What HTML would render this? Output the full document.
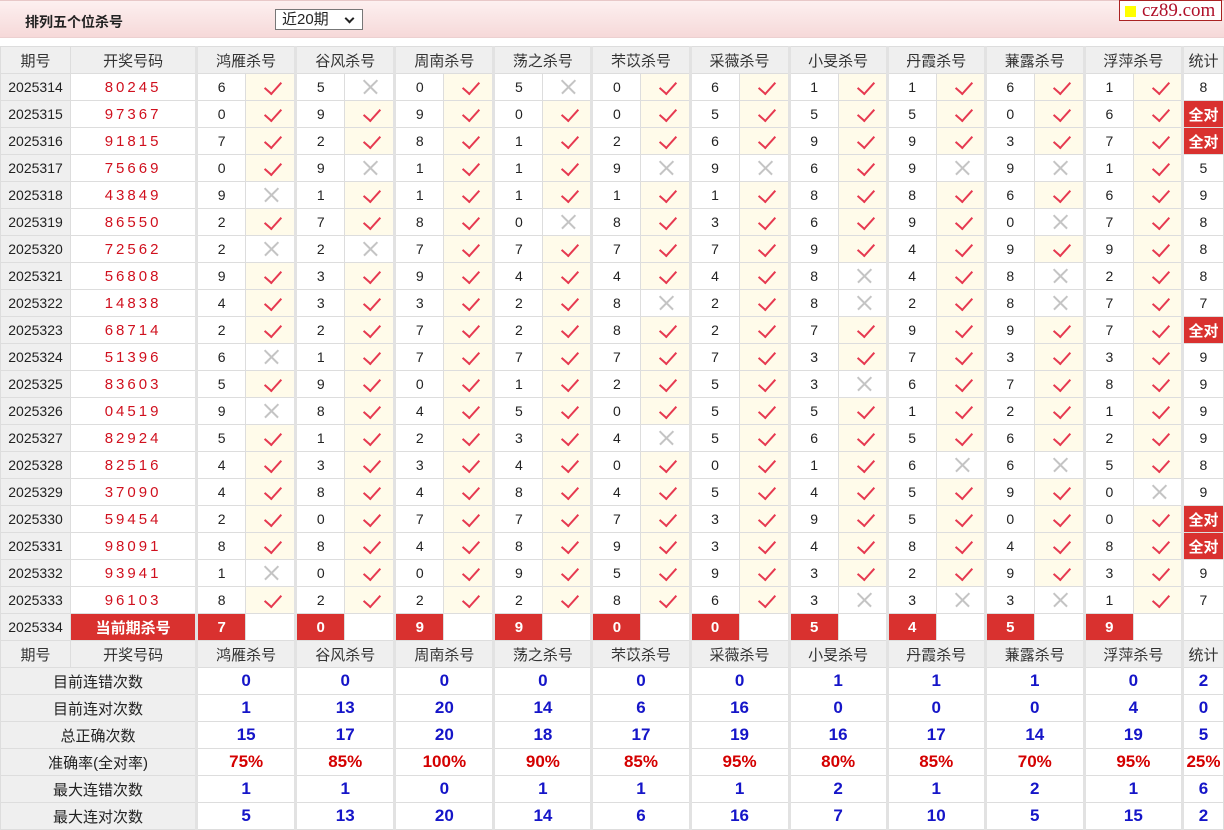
<!DOCTYPE html>
<html><head><meta charset="utf-8"><style>
body{margin:0;background:#fff;font-family:"Liberation Sans","Noto Sans CJK SC",sans-serif;font-size:14px;color:#222;width:1224px;height:828px;overflow:hidden;position:relative}
.top{position:absolute;left:0;top:0;width:1224px;height:38px;background:linear-gradient(#fdf0f0,#f6d9d9);border-top:1px solid #e8c8c8;border-bottom:1px solid #ecd0d0;box-sizing:border-box}
.title{position:absolute;left:25px;top:11px;font-weight:bold;font-size:14px;color:#222}
.sel{position:absolute;left:275px;top:8px;width:88px;height:21px;border:1px solid #777;background:#fff;box-sizing:border-box;font-size:15px;padding-left:6px;line-height:19px}
.sel:after{content:"";position:absolute;right:9px;top:5px;width:5px;height:5px;border-right:2px solid #222;border-bottom:2px solid #222;transform:rotate(45deg)}
.logo{position:absolute;left:1119px;top:0;width:103px;height:21px;border:1px solid #a22;background:#fff;box-sizing:border-box;font-family:"Liberation Serif",serif;font-size:19px;color:#b0102a;line-height:19px;padding-left:22px}
.logo:before{content:"";position:absolute;left:5px;top:5px;width:11px;height:11px;background:#ff0}
table{position:absolute;left:0;top:46px;border-collapse:collapse;table-layout:fixed;width:1224px}
td{border:1px solid #ddd;height:26px;padding:0;text-align:center;white-space:nowrap;overflow:hidden}
tr.h td{background:#efefef;color:#333;font-size:15px}
td.q{background:#efefef;color:#222}
td.k{color:#d0101e;letter-spacing:3px;font-size:15px}
td.g{border-left:3px solid #e2e2e2}
td.y{background:#fffbea;position:relative}
td.y:after{content:"";position:absolute;left:22px;top:4px;width:8px;height:14px;border-right:2px solid #e63950;border-bottom:2px solid #e63950;transform:rotate(42deg)}
td.x{position:relative}
td.x:before,td.x:after{content:"";position:absolute;left:16px;top:12px;width:19px;height:1.5px;background:#c4c4c4;transform:rotate(45deg)}
td.x:after{transform:rotate(-45deg)}
td.a{background:#d9312f;color:#fff;font-weight:bold;font-size:15px}
td.r{background:#d9312f;color:#fff;font-weight:bold;font-size:15px}
td.s{background:#efefef;font-size:15px}
td.b{color:#1515c8;font-weight:bold;font-size:17px}
td.p{color:#d40000;font-weight:bold;font-size:17px}
</style></head><body>
<div class="top"><div class="title">排列五个位杀号</div><div class="sel">近20期</div></div>
<div class="logo">cz89.com</div>
<table>
<colgroup><col style="width:70px"><col style="width:126px"><col style="width:49px"><col style="width:50px"><col style="width:49px"><col style="width:50px"><col style="width:49px"><col style="width:50px"><col style="width:49px"><col style="width:49px"><col style="width:49px"><col style="width:49px"><col style="width:49px"><col style="width:50px"><col style="width:49px"><col style="width:49px"><col style="width:49px"><col style="width:49px"><col style="width:49px"><col style="width:50px"><col style="width:49px"><col style="width:49px"><col style="width:41px"></colgroup>
<tr class="h"><td>期号</td><td>开奖号码</td><td class="g" colspan="2">鸿雁杀号</td><td class="g" colspan="2">谷风杀号</td><td class="g" colspan="2">周南杀号</td><td class="g" colspan="2">荡之杀号</td><td class="g" colspan="2">芣苡杀号</td><td class="g" colspan="2">采薇杀号</td><td class="g" colspan="2">小旻杀号</td><td class="g" colspan="2">丹霞杀号</td><td class="g" colspan="2">蒹露杀号</td><td class="g" colspan="2">浮萍杀号</td><td class="g">统计</td></tr>
<tr><td class="q">2025314</td><td class="k">80245</td><td class="g">6</td><td class="y"></td><td class="g">5</td><td class="x"></td><td class="g">0</td><td class="y"></td><td class="g">5</td><td class="x"></td><td class="g">0</td><td class="y"></td><td class="g">6</td><td class="y"></td><td class="g">1</td><td class="y"></td><td class="g">1</td><td class="y"></td><td class="g">6</td><td class="y"></td><td class="g">1</td><td class="y"></td><td class="g">8</td></tr>
<tr><td class="q">2025315</td><td class="k">97367</td><td class="g">0</td><td class="y"></td><td class="g">9</td><td class="y"></td><td class="g">9</td><td class="y"></td><td class="g">0</td><td class="y"></td><td class="g">0</td><td class="y"></td><td class="g">5</td><td class="y"></td><td class="g">5</td><td class="y"></td><td class="g">5</td><td class="y"></td><td class="g">0</td><td class="y"></td><td class="g">6</td><td class="y"></td><td class="g a">全对</td></tr>
<tr><td class="q">2025316</td><td class="k">91815</td><td class="g">7</td><td class="y"></td><td class="g">2</td><td class="y"></td><td class="g">8</td><td class="y"></td><td class="g">1</td><td class="y"></td><td class="g">2</td><td class="y"></td><td class="g">6</td><td class="y"></td><td class="g">9</td><td class="y"></td><td class="g">9</td><td class="y"></td><td class="g">3</td><td class="y"></td><td class="g">7</td><td class="y"></td><td class="g a">全对</td></tr>
<tr><td class="q">2025317</td><td class="k">75669</td><td class="g">0</td><td class="y"></td><td class="g">9</td><td class="x"></td><td class="g">1</td><td class="y"></td><td class="g">1</td><td class="y"></td><td class="g">9</td><td class="x"></td><td class="g">9</td><td class="x"></td><td class="g">6</td><td class="y"></td><td class="g">9</td><td class="x"></td><td class="g">9</td><td class="x"></td><td class="g">1</td><td class="y"></td><td class="g">5</td></tr>
<tr><td class="q">2025318</td><td class="k">43849</td><td class="g">9</td><td class="x"></td><td class="g">1</td><td class="y"></td><td class="g">1</td><td class="y"></td><td class="g">1</td><td class="y"></td><td class="g">1</td><td class="y"></td><td class="g">1</td><td class="y"></td><td class="g">8</td><td class="y"></td><td class="g">8</td><td class="y"></td><td class="g">6</td><td class="y"></td><td class="g">6</td><td class="y"></td><td class="g">9</td></tr>
<tr><td class="q">2025319</td><td class="k">86550</td><td class="g">2</td><td class="y"></td><td class="g">7</td><td class="y"></td><td class="g">8</td><td class="y"></td><td class="g">0</td><td class="x"></td><td class="g">8</td><td class="y"></td><td class="g">3</td><td class="y"></td><td class="g">6</td><td class="y"></td><td class="g">9</td><td class="y"></td><td class="g">0</td><td class="x"></td><td class="g">7</td><td class="y"></td><td class="g">8</td></tr>
<tr><td class="q">2025320</td><td class="k">72562</td><td class="g">2</td><td class="x"></td><td class="g">2</td><td class="x"></td><td class="g">7</td><td class="y"></td><td class="g">7</td><td class="y"></td><td class="g">7</td><td class="y"></td><td class="g">7</td><td class="y"></td><td class="g">9</td><td class="y"></td><td class="g">4</td><td class="y"></td><td class="g">9</td><td class="y"></td><td class="g">9</td><td class="y"></td><td class="g">8</td></tr>
<tr><td class="q">2025321</td><td class="k">56808</td><td class="g">9</td><td class="y"></td><td class="g">3</td><td class="y"></td><td class="g">9</td><td class="y"></td><td class="g">4</td><td class="y"></td><td class="g">4</td><td class="y"></td><td class="g">4</td><td class="y"></td><td class="g">8</td><td class="x"></td><td class="g">4</td><td class="y"></td><td class="g">8</td><td class="x"></td><td class="g">2</td><td class="y"></td><td class="g">8</td></tr>
<tr><td class="q">2025322</td><td class="k">14838</td><td class="g">4</td><td class="y"></td><td class="g">3</td><td class="y"></td><td class="g">3</td><td class="y"></td><td class="g">2</td><td class="y"></td><td class="g">8</td><td class="x"></td><td class="g">2</td><td class="y"></td><td class="g">8</td><td class="x"></td><td class="g">2</td><td class="y"></td><td class="g">8</td><td class="x"></td><td class="g">7</td><td class="y"></td><td class="g">7</td></tr>
<tr><td class="q">2025323</td><td class="k">68714</td><td class="g">2</td><td class="y"></td><td class="g">2</td><td class="y"></td><td class="g">7</td><td class="y"></td><td class="g">2</td><td class="y"></td><td class="g">8</td><td class="y"></td><td class="g">2</td><td class="y"></td><td class="g">7</td><td class="y"></td><td class="g">9</td><td class="y"></td><td class="g">9</td><td class="y"></td><td class="g">7</td><td class="y"></td><td class="g a">全对</td></tr>
<tr><td class="q">2025324</td><td class="k">51396</td><td class="g">6</td><td class="x"></td><td class="g">1</td><td class="y"></td><td class="g">7</td><td class="y"></td><td class="g">7</td><td class="y"></td><td class="g">7</td><td class="y"></td><td class="g">7</td><td class="y"></td><td class="g">3</td><td class="y"></td><td class="g">7</td><td class="y"></td><td class="g">3</td><td class="y"></td><td class="g">3</td><td class="y"></td><td class="g">9</td></tr>
<tr><td class="q">2025325</td><td class="k">83603</td><td class="g">5</td><td class="y"></td><td class="g">9</td><td class="y"></td><td class="g">0</td><td class="y"></td><td class="g">1</td><td class="y"></td><td class="g">2</td><td class="y"></td><td class="g">5</td><td class="y"></td><td class="g">3</td><td class="x"></td><td class="g">6</td><td class="y"></td><td class="g">7</td><td class="y"></td><td class="g">8</td><td class="y"></td><td class="g">9</td></tr>
<tr><td class="q">2025326</td><td class="k">04519</td><td class="g">9</td><td class="x"></td><td class="g">8</td><td class="y"></td><td class="g">4</td><td class="y"></td><td class="g">5</td><td class="y"></td><td class="g">0</td><td class="y"></td><td class="g">5</td><td class="y"></td><td class="g">5</td><td class="y"></td><td class="g">1</td><td class="y"></td><td class="g">2</td><td class="y"></td><td class="g">1</td><td class="y"></td><td class="g">9</td></tr>
<tr><td class="q">2025327</td><td class="k">82924</td><td class="g">5</td><td class="y"></td><td class="g">1</td><td class="y"></td><td class="g">2</td><td class="y"></td><td class="g">3</td><td class="y"></td><td class="g">4</td><td class="x"></td><td class="g">5</td><td class="y"></td><td class="g">6</td><td class="y"></td><td class="g">5</td><td class="y"></td><td class="g">6</td><td class="y"></td><td class="g">2</td><td class="y"></td><td class="g">9</td></tr>
<tr><td class="q">2025328</td><td class="k">82516</td><td class="g">4</td><td class="y"></td><td class="g">3</td><td class="y"></td><td class="g">3</td><td class="y"></td><td class="g">4</td><td class="y"></td><td class="g">0</td><td class="y"></td><td class="g">0</td><td class="y"></td><td class="g">1</td><td class="y"></td><td class="g">6</td><td class="x"></td><td class="g">6</td><td class="x"></td><td class="g">5</td><td class="y"></td><td class="g">8</td></tr>
<tr><td class="q">2025329</td><td class="k">37090</td><td class="g">4</td><td class="y"></td><td class="g">8</td><td class="y"></td><td class="g">4</td><td class="y"></td><td class="g">8</td><td class="y"></td><td class="g">4</td><td class="y"></td><td class="g">5</td><td class="y"></td><td class="g">4</td><td class="y"></td><td class="g">5</td><td class="y"></td><td class="g">9</td><td class="y"></td><td class="g">0</td><td class="x"></td><td class="g">9</td></tr>
<tr><td class="q">2025330</td><td class="k">59454</td><td class="g">2</td><td class="y"></td><td class="g">0</td><td class="y"></td><td class="g">7</td><td class="y"></td><td class="g">7</td><td class="y"></td><td class="g">7</td><td class="y"></td><td class="g">3</td><td class="y"></td><td class="g">9</td><td class="y"></td><td class="g">5</td><td class="y"></td><td class="g">0</td><td class="y"></td><td class="g">0</td><td class="y"></td><td class="g a">全对</td></tr>
<tr><td class="q">2025331</td><td class="k">98091</td><td class="g">8</td><td class="y"></td><td class="g">8</td><td class="y"></td><td class="g">4</td><td class="y"></td><td class="g">8</td><td class="y"></td><td class="g">9</td><td class="y"></td><td class="g">3</td><td class="y"></td><td class="g">4</td><td class="y"></td><td class="g">8</td><td class="y"></td><td class="g">4</td><td class="y"></td><td class="g">8</td><td class="y"></td><td class="g a">全对</td></tr>
<tr><td class="q">2025332</td><td class="k">93941</td><td class="g">1</td><td class="x"></td><td class="g">0</td><td class="y"></td><td class="g">0</td><td class="y"></td><td class="g">9</td><td class="y"></td><td class="g">5</td><td class="y"></td><td class="g">9</td><td class="y"></td><td class="g">3</td><td class="y"></td><td class="g">2</td><td class="y"></td><td class="g">9</td><td class="y"></td><td class="g">3</td><td class="y"></td><td class="g">9</td></tr>
<tr><td class="q">2025333</td><td class="k">96103</td><td class="g">8</td><td class="y"></td><td class="g">2</td><td class="y"></td><td class="g">2</td><td class="y"></td><td class="g">2</td><td class="y"></td><td class="g">8</td><td class="y"></td><td class="g">6</td><td class="y"></td><td class="g">3</td><td class="x"></td><td class="g">3</td><td class="x"></td><td class="g">3</td><td class="x"></td><td class="g">1</td><td class="y"></td><td class="g">7</td></tr>
<tr><td class="q">2025334</td><td class="r">当前期杀号</td><td class="g r">7</td><td></td><td class="g r">0</td><td></td><td class="g r">9</td><td></td><td class="g r">9</td><td></td><td class="g r">0</td><td></td><td class="g r">0</td><td></td><td class="g r">5</td><td></td><td class="g r">4</td><td></td><td class="g r">5</td><td></td><td class="g r">9</td><td></td><td class="g"></td></tr>
<tr class="h"><td>期号</td><td>开奖号码</td><td class="g" colspan="2">鸿雁杀号</td><td class="g" colspan="2">谷风杀号</td><td class="g" colspan="2">周南杀号</td><td class="g" colspan="2">荡之杀号</td><td class="g" colspan="2">芣苡杀号</td><td class="g" colspan="2">采薇杀号</td><td class="g" colspan="2">小旻杀号</td><td class="g" colspan="2">丹霞杀号</td><td class="g" colspan="2">蒹露杀号</td><td class="g" colspan="2">浮萍杀号</td><td class="g">统计</td></tr>
<tr><td class="s" colspan="2">目前连错次数</td><td class="g b" colspan="2">0</td><td class="g b" colspan="2">0</td><td class="g b" colspan="2">0</td><td class="g b" colspan="2">0</td><td class="g b" colspan="2">0</td><td class="g b" colspan="2">0</td><td class="g b" colspan="2">1</td><td class="g b" colspan="2">1</td><td class="g b" colspan="2">1</td><td class="g b" colspan="2">0</td><td class="g b">2</td></tr>
<tr><td class="s" colspan="2">目前连对次数</td><td class="g b" colspan="2">1</td><td class="g b" colspan="2">13</td><td class="g b" colspan="2">20</td><td class="g b" colspan="2">14</td><td class="g b" colspan="2">6</td><td class="g b" colspan="2">16</td><td class="g b" colspan="2">0</td><td class="g b" colspan="2">0</td><td class="g b" colspan="2">0</td><td class="g b" colspan="2">4</td><td class="g b">0</td></tr>
<tr><td class="s" colspan="2">总正确次数</td><td class="g b" colspan="2">15</td><td class="g b" colspan="2">17</td><td class="g b" colspan="2">20</td><td class="g b" colspan="2">18</td><td class="g b" colspan="2">17</td><td class="g b" colspan="2">19</td><td class="g b" colspan="2">16</td><td class="g b" colspan="2">17</td><td class="g b" colspan="2">14</td><td class="g b" colspan="2">19</td><td class="g b">5</td></tr>
<tr><td class="s" colspan="2">准确率(全对率)</td><td class="g p" colspan="2">75%</td><td class="g p" colspan="2">85%</td><td class="g p" colspan="2">100%</td><td class="g p" colspan="2">90%</td><td class="g p" colspan="2">85%</td><td class="g p" colspan="2">95%</td><td class="g p" colspan="2">80%</td><td class="g p" colspan="2">85%</td><td class="g p" colspan="2">70%</td><td class="g p" colspan="2">95%</td><td class="g p">25%</td></tr>
<tr><td class="s" colspan="2">最大连错次数</td><td class="g b" colspan="2">1</td><td class="g b" colspan="2">1</td><td class="g b" colspan="2">0</td><td class="g b" colspan="2">1</td><td class="g b" colspan="2">1</td><td class="g b" colspan="2">1</td><td class="g b" colspan="2">2</td><td class="g b" colspan="2">1</td><td class="g b" colspan="2">2</td><td class="g b" colspan="2">1</td><td class="g b">6</td></tr>
<tr><td class="s" colspan="2">最大连对次数</td><td class="g b" colspan="2">5</td><td class="g b" colspan="2">13</td><td class="g b" colspan="2">20</td><td class="g b" colspan="2">14</td><td class="g b" colspan="2">6</td><td class="g b" colspan="2">16</td><td class="g b" colspan="2">7</td><td class="g b" colspan="2">10</td><td class="g b" colspan="2">5</td><td class="g b" colspan="2">15</td><td class="g b">2</td></tr>
</table>
</body></html>
